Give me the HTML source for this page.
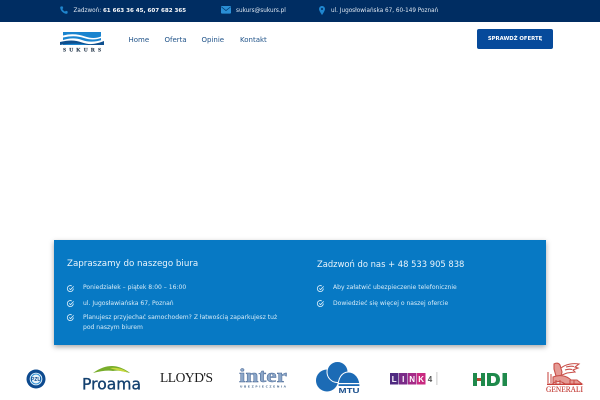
<!DOCTYPE html>
<html lang="pl">
<head>
<meta charset="utf-8">
<title>Sukurs</title>
<style>
html,body{margin:0;padding:0;width:600px;height:400px;overflow:hidden;background:#fff;font-family:"DejaVu Sans","Liberation Sans",sans-serif}
.a{position:absolute;white-space:nowrap}
#top{position:absolute;left:0;top:0;width:600px;height:21.5px;background:#002d62}
.t{font-size:5.7px;line-height:8px;color:#dfe8f2}
.n{font-size:7px;line-height:10px;color:#1f5288;top:35px}
#btn{position:absolute;left:477px;top:29px;width:76px;height:20px;background:#064a9b;border-radius:2px;color:#fff;font-size:5.300px;font-weight:bold;text-align:center;line-height:20px}
#panel{position:absolute;left:54px;top:240px;width:492px;height:105px;background:#0779c4;box-shadow:0 2px 5px rgba(0,0,0,.35)}
.h{line-height:12px;color:#eaf4fb}
.l{font-size:6.050px;line-height:10px;color:#d8ecf8;white-space:nowrap;position:absolute}
svg{position:absolute;overflow:visible}
</style>
</head>
<body>
<div id="top"></div>
<svg style="left:60px;top:6px" width="8" height="8" viewBox="0 0 8 8"><path d="M1 .5 2.4 .2 3.3 2 2.4 3C2.9 4.2 3.8 5.1 5 5.6L6 4.7 7.8 5.6 7.5 7C7.4 7.6 7 7.8 6.5 7.800 3.2 7.5.5 4.8.2 1.5.2 1 .5.6 1 .5Z" fill="#1f86cf"/></svg>
<div class="a t" style="left:73.500px;top:6.500px">Zadzwoń: <b style="color:#fff;font-size:5.550px">61 663 36 45, 607 682 365</b></div>
<svg style="left:221px;top:6px" width="10" height="8" viewBox="0 0 10 8"><rect width="10" height="7.600" rx="1" fill="#2a8fd6"/><path d="M.5 1 5 4.500 9.500 1" fill="none" stroke="#00386f" stroke-width=".7"/></svg>
<div class="a t" style="left:236px;top:6.500px">sukurs@sukurs.pl</div>
<svg style="left:319px;top:5.500px" width="6" height="9" viewBox="0 0 6 9"><path d="M3 0C1.300 0 0 1.300 0 3 0 5 3 9 3 9S6 5 6 3C6 1.300 4.700 0 3 0Z" fill="#1f86cf"/><circle cx="3" cy="3" r="1" fill="#002d62"/></svg>
<div class="a t" style="left:331px;top:6.500px">ul. Jugosłowiańska 67, 60-149 Poznań</div>

<svg style="left:60px;top:32px" width="44" height="20" viewBox="0 0 44 20">
<rect x="3" y="0" width="38" height="13" fill="#1a84cf"/>
<path d="M0 9C9 6 15 5.500 22 8 29 10.500 35 10 44 7.500V10.500C35 13 29 13.500 22 11 15 8.500 9 9.500 0 12.500Z" fill="#fff"/>
<path d="M3 3.500C12 1 19 2.500 25 4.500 31 6.500 36 6.500 41 4.500V6C36 8 30 8 24 6 18 4 12 3.500 3 5.500Z" fill="#fff"/>
<path d="M0 10C9 8 15 8 22 10.500 29 13 35 12.500 44 9V13H28C22 11.500 12 11 0 13Z" fill="#0e4f8e"/>
<text x="3" y="19.500" font-family="Liberation Serif" font-size="5.500" font-weight="bold" fill="#2b3d50" stroke="#2b3d50" stroke-width=".15" textLength="38" lengthAdjust="spacing">SUKURS</text>
</svg>
<div class="a n" style="left:128.500px">Home</div>
<div class="a n" style="left:164.500px">Oferta</div>
<div class="a n" style="left:201.500px">Opinie</div>
<div class="a n" style="left:240px">Kontakt</div>
<div id="btn">SPRAWDŹ OFERTĘ</div>

<div id="panel"></div>
<div class="a h" style="left:67px;top:258px;font-size:8.700px">Zapraszamy do naszego biura</div>
<div class="a h" style="left:317px;top:257.500px;font-size:8.400px">Zadzwoń do nas + 48 533 905 838</div>

<svg width="0" height="0" style="left:0;top:0"><defs><g id="c"><path d="M6.300 3.500A3 3 0 1 1 4.800 1" fill="none" stroke="#e3f1fa" stroke-width=".8"/><path d="M2.200 3.400 3.500 4.700 6.700 1.400" fill="none" stroke="#e3f1fa" stroke-width=".8"/></g></defs></svg>
<svg style="left:67px;top:284.500px" width="7" height="7"><use href="#c"/></svg>
<svg style="left:67px;top:300px" width="7" height="7"><use href="#c"/></svg>
<svg style="left:67px;top:314px" width="7" height="7"><use href="#c"/></svg>
<svg style="left:317px;top:284.500px" width="7" height="7"><use href="#c"/></svg>
<svg style="left:317px;top:300px" width="7" height="7"><use href="#c"/></svg>
<div class="l" style="left:83px;top:283px">Poniedziałek – piątek 8:00 – 16:00</div>
<div class="l" style="left:83px;top:298.500px">ul. Jugosławiańska 67, Poznań</div>
<div class="l" style="left:83px;top:312.500px">Planujesz przyjechać samochodem? Z łatwością zaparkujesz tuż<br>pod naszym biurem</div>
<div class="l" style="left:333px;top:283px">Aby załatwić ubezpieczenie telefonicznie</div>
<div class="l" style="left:333px;top:298.500px">Dowiedzieć się więcej o naszej ofercie</div>

<svg style="left:26px;top:369px" width="20" height="20" viewBox="0 0 20 20"><circle cx="10" cy="10" r="9.500" fill="#0d4a8f"/><circle cx="10" cy="10" r="6.300" fill="#fff"/><circle cx="10" cy="10" r="5" fill="#e8f1f8" stroke="#2b8fd6" stroke-width="1"/><text x="10" y="12" text-anchor="middle" font-family="Liberation Sans" font-size="5" font-weight="bold" fill="#0d4a8f">PZU</text></svg>

<svg style="left:80px;top:365px" width="62" height="27" viewBox="0 0 62 27"><path d="M13 8C20 3 26 1 32 1 38 1 45 4 50 8 43 6 37 5 33 6 28 5 21 6 13 8Z" fill="#78ad2b"/><path d="M30 3C36 2 44 4 48 7.500 41 6 35 5 30 3Z" fill="#c7d83d"/><text x="2" y="24.500" font-family="DejaVu Sans" font-size="16" fill="#13406f" stroke="#13406f" stroke-width=".35" textLength="59" lengthAdjust="spacingAndGlyphs">Proama</text></svg>

<div class="a" style="left:160px;top:370px;font-family:'Liberation Serif',serif;font-size:13.500px;line-height:16px;color:#1a1a1a;letter-spacing:-.45px">LLOYD'S</div>

<svg style="left:239px;top:367px" width="48" height="22" viewBox="0 0 48 22"><text x="0" y="15" font-family="Liberation Serif" font-weight="bold" font-size="19" fill="#8ba6c8" stroke="#3f5f8f" stroke-width=".4" textLength="48" lengthAdjust="spacingAndGlyphs">inter</text><text x="1" y="20.500" font-family="DejaVu Sans" font-weight="bold" font-size="3" fill="#4a6a90" textLength="46" lengthAdjust="spacing">UBEZPIECZENIA</text></svg>

<svg style="left:315px;top:361px" width="46" height="34" viewBox="0 0 46 34"><circle cx="12" cy="19.500" r="11" fill="#1c6bb5"/><circle cx="22.500" cy="11" r="10.500" fill="#1c6bb5" stroke="#fff" stroke-width="1"/><path d="M23 25.500C23 17 27 11 33.500 11 40 11 45 17 45 25.500Z" fill="#1c6bb5" stroke="#fff" stroke-width="1"/><rect x="23" y="22" width="22" height="1.200" fill="#fff"/><rect x="22" y="26" width="24" height="8" fill="#fff"/><text x="34" y="32" text-anchor="middle" font-family="Liberation Sans" font-size="7" font-weight="bold" fill="#1a4f8c" textLength="21" lengthAdjust="spacingAndGlyphs">MTU</text></svg>

<svg style="left:389px;top:372px" width="50" height="14" viewBox="0 0 50 14"><rect x="1" y="1" width="8.500" height="11.500" fill="#4f2a80"/><rect x="10" y="1" width="8.500" height="11.500" fill="#7a2b88"/><rect x="19" y="1" width="8.500" height="11.500" fill="#a52b88"/><rect x="28" y="1" width="8.500" height="11.500" fill="#c92a80"/><g font-family="Liberation Sans" font-size="8" font-weight="bold" fill="#fff" text-anchor="middle"><text x="5.200" y="9.800">L</text><text x="14.200" y="9.800">I</text><text x="23.200" y="9.800">N</text><text x="32.200" y="9.800">K</text></g><text x="41" y="9.800" text-anchor="middle" font-family="Liberation Sans" font-size="8" font-weight="bold" fill="#555">4</text><rect x="47.500" y="0" width=".8" height="13" fill="#bbb"/></svg>

<svg style="left:471.500px;top:373px" width="36" height="13" viewBox="0 0 34 13"><path d="M0 0H4V5H8V0H12V13H8V8H4V13H0Z" fill="#1f8a4c"/><rect x="4" y="5.300" width="4" height="2.400" fill="#d8392b"/><path d="M14 0H20C25 0 27 3 27 6.500 27 10 25 13 20 13H14ZM18 3V10H20C22 10 23 8.500 23 6.500 23 4.500 22 3 20 3Z" fill="#1f8a4c" fill-rule="evenodd"/><rect x="29.500" y="0" width="4.500" height="13" fill="#1f8a4c"/></svg>

<svg style="left:546px;top:362px" width="38" height="31" viewBox="0 0 38 31"><g fill="none" stroke="#c9504a" stroke-width="1.100"><path d="M8 2C10 .5 13 1 14 3L16 10 15 14H10L8 7Z" fill="#e59a94"/><path d="M15 6C20 2 27 1 33 2L29 5 32 6 27 8 29 10 21 11 16 13"/><path d="M20 5C24 4 26 4 28 4.500M19 8C22 7 24 7 26 7.500"/><path d="M2 10V21M5 12V21"/><path d="M7 15C14 12 21 14 25 18L31 18 36 22H19C15 19 11 19 7 21Z" fill="#e59a94"/><path d="M10 18V22M14 18V22M24 18V22M28 18V22"/></g><path d="M1 21.500H36V23H1Z" fill="#c9403a"/><text x="0" y="30" font-family="Liberation Serif" font-size="8" fill="#c23a34" stroke="#c23a34" stroke-width=".12" textLength="37" lengthAdjust="spacingAndGlyphs">GENERALI</text></svg>
</body>
</html>
